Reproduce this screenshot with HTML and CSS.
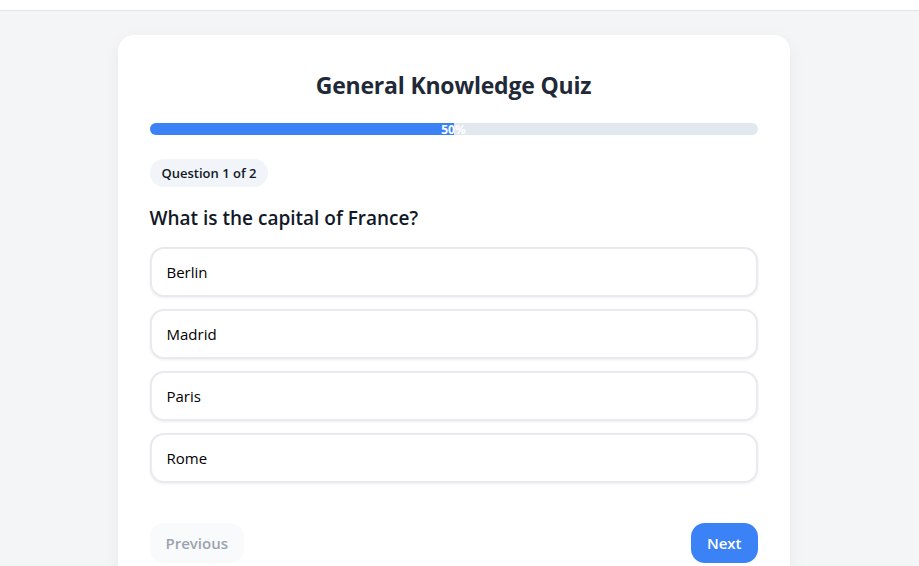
FILE: index.html
```html
<!DOCTYPE html>
<html lang="en">
<head>
<meta charset="utf-8">
<title>General Knowledge Quiz</title>
<link rel="stylesheet" href="styles.css">
</head>
<body>
<header class="topbar"></header>
<main class="page">
  <section class="card">
    <h1 class="title">General Knowledge Quiz</h1>
    <div class="progress">
      <div class="progress-fill" style="width: 50%"></div>
      <span class="progress-label">50%</span>
    </div>
    <span class="badge">Question 1 of 2</span>
    <h2 class="question">What is the capital of France?</h2>
    <div class="options">
      <button class="option">Berlin</button>
      <button class="option">Madrid</button>
      <button class="option">Paris</button>
      <button class="option">Rome</button>
    </div>
    <div class="nav">
      <button class="btn btn-prev" disabled>Previous</button>
      <button class="btn btn-next">Next</button>
    </div>
  </section>
</main>
</body>
</html>
```
FILE: styles.css
```css
* { box-sizing: border-box; }
html, body { margin: 0; padding: 0; }
body {
  font-family: "Open Sans", "Noto Sans", sans-serif;
  background: #f4f5f7;
  color: #111827;
  height: 566px;
  overflow: hidden;
}
.topbar {
  height: 11px;
  background: #ffffff;
  border-bottom: 1px solid #e2e4e8;
}
.page {
  display: flex;
  justify-content: center;
  padding: 24px 12px 0 0;
}
.card {
  width: 672px;
  background: #ffffff;
  border-radius: 16px;
  padding: 32px 32px 40px;
  box-shadow: 0 4px 16px rgba(15, 23, 42, 0.05);
  display: flex;
  flex-direction: column;
  align-items: flex-start;
}
.title {
  align-self: stretch;
  text-align: center;
  margin: 0;
  font-size: 23px;
  line-height: 36px;
  font-weight: 700;
  color: #1f2937;
  letter-spacing: -0.2px;
}
.progress {
  position: relative;
  align-self: stretch;
  height: 12px;
  margin-top: 20px;
  background: #e2e8f0;
  border-radius: 999px;
}
.progress-fill {
  height: 100%;
  background: #3b82f6;
  border-radius: 999px 0 0 999px;
}
.progress-label {
  position: absolute;
  left: 0;
  right: 0;
  top: 0;
  text-align: center;
  font-size: 12px;
  line-height: 13px;
  font-weight: 700;
  color: #ffffff;
}
.badge {
  margin-top: 24px;
  height: 28px;
  line-height: 28px;
  padding: 0 12px;
  border-radius: 999px;
  background: #f1f5f9;
  font-size: 13px;
  font-weight: 600;
  color: #111827;
}
.question {
  margin: 16px 0 0;
  font-size: 19px;
  line-height: 30px;
  font-weight: 600;
  color: #111827;
}
.options {
  align-self: stretch;
  display: flex;
  flex-direction: column;
  gap: 12px;
  margin-top: 14px;
}
.option {
  height: 50px;
  text-align: left;
  padding: 0 15px;
  border: 2px solid #e8eaee;
  border-radius: 14px;
  background: #ffffff;
  box-shadow: 0 1px 3px rgba(0, 0, 0, 0.07);
  font-family: inherit;
  font-size: 15px;
  color: #000000;
  cursor: pointer;
}
.nav {
  align-self: stretch;
  display: flex;
  justify-content: space-between;
  margin-top: 40px;
}
.btn {
  height: 40px;
  padding: 0 16px;
  border: none;
  border-radius: 14px;
  font-family: inherit;
  font-size: 15px;
  font-weight: 600;
}
.btn-prev {
  background: #f8fafc;
  color: #9ca3af;
}
.btn-next {
  background: #3b82f6;
  color: #ffffff;
}
```
